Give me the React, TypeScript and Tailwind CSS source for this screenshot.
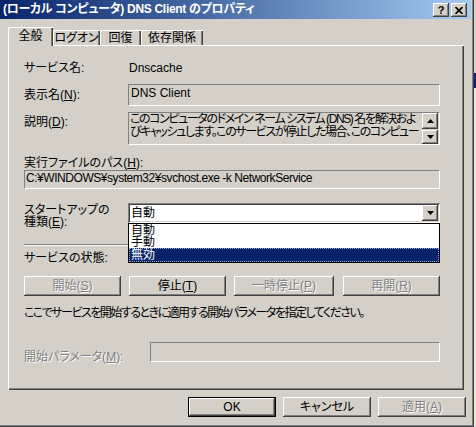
import React from 'react';

// Windows classic 3D edges
const raised =
  'bg-[#d4d0c8] shadow-[inset_-1px_-1px_#404040,inset_1px_1px_#ffffff,inset_-2px_-2px_#808080]';
const sunkenFlat = 'border border-t-[#808080] border-l-[#808080] border-b-white border-r-white bg-[#d4d0c8]';
const sunkenDeep =
  'shadow-[inset_1px_1px_#808080,inset_-1px_-1px_#ffffff,inset_2px_2px_#404040,inset_-2px_-2px_#d4d0c8]';
const disabledText = 'text-[#808080] [text-shadow:1px_1px_0_#ffffff]';

function Arrow({ up = false }: { up?: boolean }) {
  return (
    <svg width="7" height="4" viewBox="0 0 7 4">
      {up ? <path d="M3.5 0 L7 4 L0 4 Z" fill="#000" /> : <path d="M0 0 L7 0 L3.5 4 Z" fill="#000" />}
    </svg>
  );
}

function Button({
  children,
  disabled = false,
  className = '',
}: {
  children: React.ReactNode;
  disabled?: boolean;
  className?: string;
}) {
  return (
    <div
      className={`flex items-center justify-center h-[20px] ${raised} ${disabled ? disabledText : ''} ${className}`}
    >
      {children}
    </div>
  );
}

function Tab({ label, selected = false, className = '' }: { label: React.ReactNode; selected?: boolean; className?: string }) {
  if (selected) {
    return (
      <div
        className={`relative z-10 -mb-[1px] flex items-center justify-center h-[19px] pb-[2px] bg-[#d4d0c8] rounded-tl-[2px] shadow-[inset_1px_1px_#ffffff,inset_-1px_0_#404040,inset_-2px_0_#808080] ${className}`}
      >
        {label}
      </div>
    );
  }
  return (
    <div
      className={`flex items-center justify-center h-[15px] pt-[1px] bg-[#d4d0c8] rounded-tl-[2px] shadow-[inset_1px_1px_#ffffff,inset_-1px_0_#404040,inset_-2px_0_#808080] ${className}`}
    >
      {label}
    </div>
  );
}

export default function App() {
  return (
    <div className="flex w-[476px] h-[427px] bg-[#d4d0c8] text-black text-[12px] leading-[14px] font-['Liberation_Sans','Noto_Sans_CJK_JP',sans-serif] [font-feature-settings:'palt'] overflow-hidden">
      <div className="flex flex-col w-[474px] h-[427px] shadow-[inset_-1px_-1px_#404040,inset_-2px_-2px_#808080]">
        {/* Title bar */}
        <div className="flex items-start h-[19px] w-[471px] bg-linear-to-r from-[#0a246a] to-[#a6caf0] pl-[3px] pr-[4px]">
          <span className="flex-1 mt-[2px] text-white font-bold whitespace-nowrap tracking-[-0.3px]">
            (ローカル コンピュータ) DNS Client のプロパティ
          </span>
          <div className={`mt-[3px] flex items-center justify-center w-[16px] h-[14px] ${raised} font-bold text-[11px] leading-[12px]`}>
            ?
          </div>
          <div className={`mt-[3px] ml-[2px] flex items-center justify-center w-[16px] h-[14px] ${raised}`}>
            <svg width="8" height="7" viewBox="0 0 8 7">
              <path d="M0.5 0 L7.5 7 M7.5 0 L0.5 7" stroke="#000" strokeWidth="1.6" />
            </svg>
          </div>
        </div>

        {/* Tabs */}
        <div className="flex items-end h-[26px] pl-[8px]">
          <Tab label="全般" selected className="w-[45px]" />
          <Tab label="ログオン" className="w-[47px]" />
          <Tab label="回復" className="w-[41px]" />
          <Tab label="依存関係" className="w-[62px]" />
        </div>

        {/* Panel */}
        <div className="relative ml-[8px] w-[456px] h-[345px] pl-[16px] flex flex-col shadow-[inset_1px_1px_#ffffff,inset_-1px_-1px_#404040,inset_-2px_-2px_#808080]">
          <div className="mt-[16px] flex h-[14px]">
            <span className="w-[105px]">サービス名:</span>
            <span>Dnscache</span>
          </div>

          <div className="mt-[9px] flex items-center h-[22px]">
            <span className="w-[104px]">
              表示名(<u>N</u>):
            </span>
            <div className={`w-[312px] h-[22px] pl-[2px] pt-[1px] ${sunkenFlat}`}>DNS Client</div>
          </div>

          <div className="mt-[6px] flex h-[33px]">
            <span className="w-[104px] mt-[3px]">
              説明(<u>D</u>):
            </span>
            <div className={`flex w-[312px] h-[33px] ${sunkenFlat}`}>
              <div className="flex-1 pl-[1px] leading-[13px] overflow-hidden whitespace-nowrap tracking-[-1.4px]">
                <div>このコンピュータのドメイン ネーム システム (DNS) 名を解決およ</div>
                <div>びキャッシュします。このサービスが停止した場合、このコンピュー</div>
              </div>
              <div className="flex flex-col w-[16px] mr-[1px] gap-[1px]">
                <div className={`flex items-center justify-center h-[16px] ${raised}`}>
                  <Arrow up />
                </div>
                <div className={`flex items-center justify-center h-[14px] ${raised}`}>
                  <Arrow />
                </div>
              </div>
            </div>
          </div>

          <div className="mt-[11px] h-[14px]">
            実行ファイルのパス(<u>H</u>):
          </div>
          <div className={`w-[416px] h-[19px] pl-[1px] whitespace-nowrap tracking-[-0.45px] ${sunkenFlat}`}>
            C:¥WINDOWS¥system32¥svchost.exe -k NetworkService
          </div>

          <div className="mt-[14px] flex h-[20px]">
            <div className="w-[104px] mt-[1px] leading-[12px]">
              <div>スタートアップの</div>
              <div>
                種類(<u>E</u>):
              </div>
            </div>
            <div className={`flex items-center w-[312px] h-[20px] bg-white pl-[3px] pr-[2px] ${sunkenDeep}`}>
              <span className="flex-1">自動</span>
              <div className={`flex items-center justify-center w-[16px] h-[16px] ${raised}`}>
                <Arrow />
              </div>
            </div>
          </div>

          <div className="mt-[21px] w-[416px] h-[2px] border-t border-t-[#808080] border-b border-b-white" />

          <div className="mt-[5px] flex h-[14px]">
            <span className="w-[105px]">サービスの状態:</span>
            <span>開始</span>
          </div>

          <div className="mt-[11px] flex h-[20px]">
            <Button disabled className="w-[97px]">
              開始(<u>S</u>)
            </Button>
            <Button className="w-[97px] ml-[8px]">
              停止(<u>T</u>)
            </Button>
            <Button disabled className="w-[100px] ml-[8px]">
              一時停止(<u>P</u>)
            </Button>
            <Button disabled className="w-[97px] ml-[9px]">
              再開(<u>R</u>)
            </Button>
          </div>

          <div className="mt-[10px] h-[14px] whitespace-nowrap tracking-[-1.5px]">
            ここでサービスを開始するときに適用する開始パラメータを指定してください。
          </div>

          <div className="mt-[22px] flex h-[20px]">
            <span className={`w-[126px] mt-[8px] ${disabledText}`}>
              開始パラメータ(<u>M</u>):
            </span>
            <div className={`w-[290px] h-[20px] ${sunkenFlat} border-t-[#404040] border-l-[#404040]`} />
          </div>

          {/* Open dropdown list */}
          <div className="absolute left-[120px] top-[178px] w-[312px] border border-black bg-white">
            <div className="h-[12px] leading-[12px] pl-[2px]">自動</div>
            <div className="h-[12px] leading-[12px] pl-[2px]">手動</div>
            <div className="h-[14px] leading-[12px] pl-[1px] bg-[#0a246a] text-white border border-dotted border-[#a0a8c8]">
              無効
            </div>
          </div>
        </div>

        {/* Bottom buttons */}
        <div className="mt-[7px] flex pl-[188px] gap-[7px]">
          <Button className="w-[88px] outline outline-1 outline-black -outline-offset-1 shadow-[inset_-2px_-2px_#404040,inset_2px_2px_#ffffff,inset_-3px_-3px_#808080]">
            OK
          </Button>
          <Button className="w-[88px]">キャンセル</Button>
          <Button disabled className="w-[88px]">
            適用(<u>A</u>)
          </Button>
        </div>
      </div>

      {/* Edge of a window behind */}
      <div className="flex flex-col w-[2px] h-[427px]">
        <div className="h-[73px] bg-[#d4d0c8]" />
        <div className="h-[15px] bg-[#0a246a]" />
        <div className="flex-1 bg-[#ece9d8]" />
      </div>
    </div>
  );
}
